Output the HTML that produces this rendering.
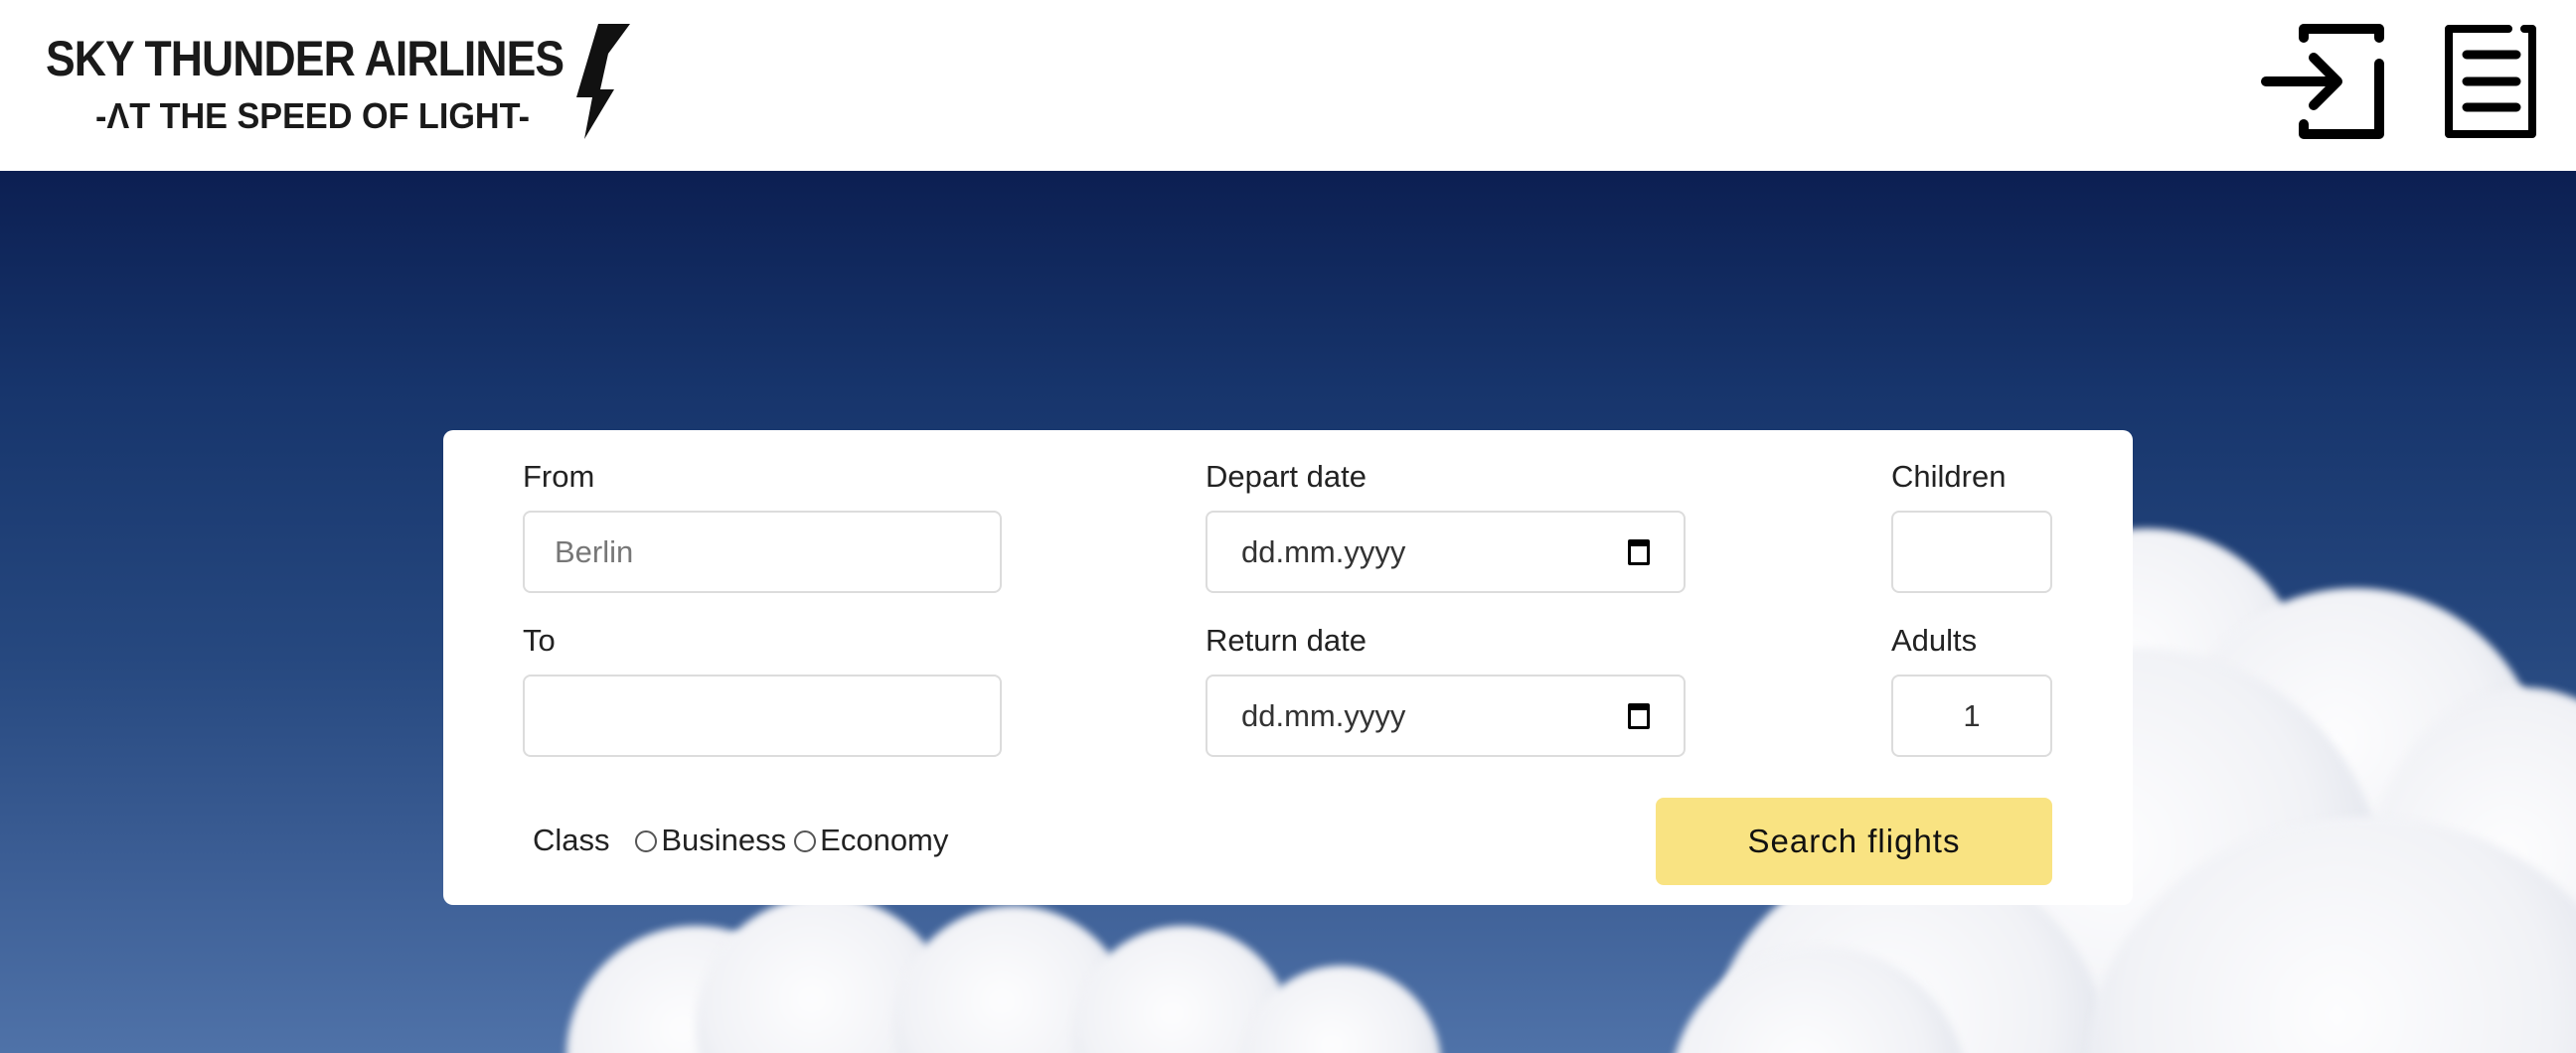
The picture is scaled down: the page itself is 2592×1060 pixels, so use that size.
<!DOCTYPE html>
<html><head><meta charset="utf-8"><style>
*{margin:0;padding:0;box-sizing:border-box}
html,body{width:2592px;height:1060px;overflow:hidden;background:#fff;font-family:"Liberation Sans",sans-serif}
.hdr{position:absolute;left:0;top:0;width:2592px;height:172px;background:#fff}
.sky{position:absolute;left:0;top:172px;width:2592px;height:888px;overflow:hidden;
background:linear-gradient(180deg,#0c1f52 0%,#17356c 25%,#26487f 55%,#3d5f96 80%,#4f72a8 100%)}
.c{position:absolute;border-radius:50%;filter:blur(4px);background:radial-gradient(circle at 45% 40%,#fdfdfe 0%,#f1f2f6 50%,#e4e7ee 68%,rgba(220,224,234,0) 71%)}
.card{position:absolute;left:446px;top:433px;width:1700px;height:478px;background:#fff;border-radius:10px}
.lbl{position:absolute;font-size:31px;color:#222}
.inp{position:absolute;height:83px;border:2px solid #dcdcdc;border-radius:8px;background:#fff;font-size:31px;color:#333;line-height:79px}
.btn{position:absolute;left:1666px;top:803px;width:399px;height:88px;background:#f9e382;border-radius:8px;font-size:33px;color:#111;text-align:center;line-height:88px;letter-spacing:1px}
.cal{position:absolute;right:34px;top:27px;width:22px;height:26px;border:3px solid #000;border-top-width:7px;border-radius:2px}
.rad{display:inline-block;width:22px;height:22px;border:2px solid #555;border-radius:50%;vertical-align:-2px;margin:0 4px 0 0}
</style></head><body>
<div class="hdr">
 <div style="position:absolute;left:46px;top:30px;font-size:50px;font-weight:bold;color:#1a1a1a;letter-spacing:-1px;transform:scaleX(0.89);transform-origin:left;white-space:nowrap">SKY THUNDER AIRLINES</div>
 <div style="position:absolute;left:96px;top:96px;font-size:36px;font-weight:bold;color:#1a1a1a;transform:scaleX(0.95);transform-origin:left;white-space:nowrap">-ΛT THE SPEED OF LIGHT-</div>
 <svg style="position:absolute;left:578px;top:22px" width="58" height="120" viewBox="0 0 58 120"><polygon points="24,2 56,2 34,32 26,68 40,68 10,118 18,76 2,76" fill="#111"/></svg>
 <svg style="position:absolute;left:2270px;top:22px" width="130" height="120" viewBox="0 0 130 120" fill="none" stroke="#000" stroke-width="10" stroke-linecap="round" stroke-linejoin="round">
  <path d="M48 16 V7 H124 V16 M124 42 V113 H48 V103"/>
  <path d="M10 60 H80 M58 36 L82 60 L58 84"/>
 </svg>
 <svg style="position:absolute;left:2456px;top:22px" width="100" height="120" viewBox="0 0 100 120" fill="none" stroke="#000" stroke-width="8" stroke-linecap="round" stroke-linejoin="round">
  <path d="M68 7 H8 V113 H92 V7 H84"/>
  <path d="M26 33 H76 M26 60 H76 M26 86 H76" stroke-width="9"/>
 </svg>
</div>
<div class="sky">
 <div class="c" style="left:1860px;top:330px;width:300px;height:300px"></div>
 <div class="c" style="left:2000px;top:360px;width:320px;height:320px"></div>
 <div class="c" style="left:2180px;top:420px;width:380px;height:380px"></div>
 <div class="c" style="left:2380px;top:520px;width:320px;height:420px"></div>
 <div class="c" style="left:1900px;top:480px;width:500px;height:500px"></div>
 <div class="c" style="left:1720px;top:690px;width:400px;height:400px"></div>
 <div class="c" style="left:2100px;top:650px;width:560px;height:500px"></div>
 <div class="c" style="left:1680px;top:780px;width:300px;height:300px"></div>
 <div class="c" style="left:570px;top:760px;width:260px;height:260px"></div>
 <div class="c" style="left:700px;top:730px;width:260px;height:260px"></div>
 <div class="c" style="left:900px;top:740px;width:240px;height:240px"></div>
 <div class="c" style="left:1080px;top:760px;width:220px;height:220px"></div>
 <div class="c" style="left:1250px;top:800px;width:200px;height:200px"></div>
</div>
<div class="card"></div>
<div class="lbl" style="left:526px;top:462px">From</div>
<div class="lbl" style="left:1213px;top:462px">Depart date</div>
<div class="lbl" style="left:1903px;top:462px">Children</div>
<div class="lbl" style="left:526px;top:627px">To</div>
<div class="lbl" style="left:1213px;top:627px">Return date</div>
<div class="lbl" style="left:1903px;top:627px">Adults</div>
<div class="inp" style="left:526px;top:514px;width:482px;padding-left:30px;color:#777">Berlin</div>
<div class="inp" style="left:1213px;top:514px;width:483px;padding-left:34px">dd.mm.yyyy<div class="cal"></div></div>
<div class="inp" style="left:1903px;top:514px;width:162px"></div>
<div class="inp" style="left:526px;top:679px;width:482px"></div>
<div class="inp" style="left:1213px;top:679px;width:483px;padding-left:34px">dd.mm.yyyy<div class="cal"></div></div>
<div class="inp" style="left:1903px;top:679px;width:162px;text-align:center">1</div>
<div class="lbl" style="left:536px;top:828px;white-space:nowrap">Class &nbsp;&nbsp;<span class="rad"></span>Business<span class="rad" style="margin-left:8px"></span>Economy</div>
<div class="btn">Search flights</div>
</body></html>
